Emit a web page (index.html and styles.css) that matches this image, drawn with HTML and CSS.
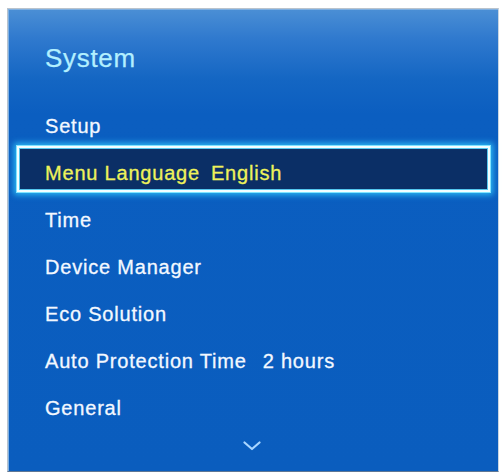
FILE: index.html
```html
<!DOCTYPE html>
<html lang="en">
<head>
<meta charset="utf-8">
<title>System</title>
<link rel="stylesheet" href="styles.css">
</head>
<body>
<div class="panel">
  <div class="title">System</div>
  <ul class="menu">
    <li class="item">Setup</li>
    <li class="item selected"><span class="label">Menu Language</span><span class="value">English</span></li>
    <li class="item">Time</li>
    <li class="item">Device Manager</li>
    <li class="item">Eco Solution</li>
    <li class="item"><span class="label">Auto Protection Time</span><span class="value wide">2 hours</span></li>
    <li class="item">General</li>
  </ul>
  <div class="more">
    <svg class="chevron" width="18" height="10" viewBox="0 0 18 10" aria-hidden="true">
      <path d="M1.5 1.5 L9 8 L16.5 1.5" fill="none" stroke="#a9d6ff" stroke-width="2.2" stroke-linecap="round" stroke-linejoin="round"/>
    </svg>
  </div>
</div>
</body>
</html>
```

FILE: styles.css
```css
html, body {
  margin: 0;
  padding: 0;
  background: #ffffff;
}

body {
  font-family: "Liberation Sans", Arial, sans-serif;
}

.panel {
  box-sizing: border-box;
  width: 492px;
  height: 464px;
  margin: 8px 0 0 7px;
  padding-top: 34px;
  border: 1px solid #b9c3cd;
  border-bottom-color: #5f7794;
  border-right-color: #c9d6e2;
  background: linear-gradient(180deg, #4b8fd5 0px, #2f79ce 30px, #1466c3 70px, #0b5ec0 105px, #0a5dbe 100%);
  box-shadow: inset 1px 1px 0 #7fb0e2;
  display: flex;
  flex-direction: column;
}

.title {
  padding-left: 37px;
  font-size: 26px;
  line-height: 30px;
  letter-spacing: 0.7px;
  color: #b2efff;
  -webkit-text-stroke: 0.25px #b2efff;
  margin-bottom: 30px;
}

.menu {
  list-style: none;
  margin: 0;
  padding: 0 0 0 37px;
}

.item {
  position: relative;
  height: 47px;
  font-size: 20px;
  line-height: 47px;
  letter-spacing: 0.8px;
  color: #f3f8ff;
  -webkit-text-stroke: 0.3px #f3f8ff;
  white-space: nowrap;
}

.value {
  margin-left: 11px;
}

.value.wide {
  margin-left: 16px;
}

.selected {
  color: #eef25a;
  -webkit-text-stroke: 0.3px #eef25a;
}

.selected::before {
  content: "";
  position: absolute;
  left: -28px;
  right: 8px;
  top: -4px;
  bottom: 5px;
  border: 2px solid #f2feff;
  background: #0b2f66;
  box-shadow: 0 0 0 1px #7fe4ff, 0 0 6px 3px #2bb8f4, inset 0 0 0 1px #54c6ee;
  z-index: 0;
}

.selected span {
  position: relative;
  z-index: 1;
}

.more {
  height: 24px;
  display: flex;
  align-items: center;
  justify-content: center;
  padding-right: 2px;
  padding-top: 2px;
}

.chevron {
  display: block;
}
```
